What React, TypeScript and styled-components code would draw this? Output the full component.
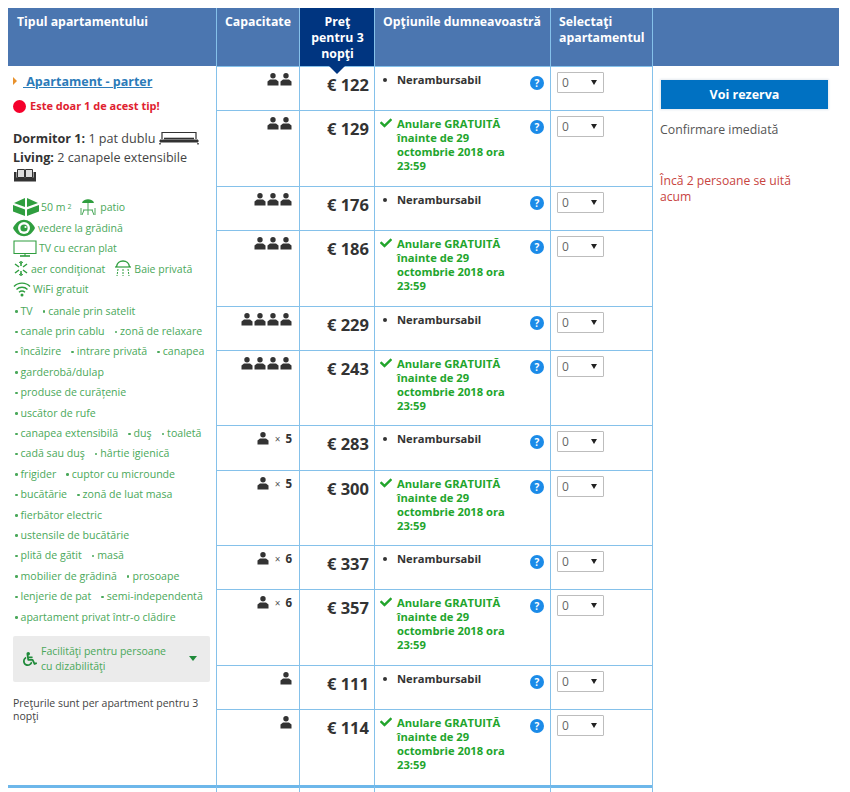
import React from "react";
import styled, { createGlobalStyle } from "styled-components";
import { FaWheelchair, FaCheck } from "react-icons/fa";

const GREEN = "#4aa85a";
const LINE = "#85c1ea";

const GlobalStyle = createGlobalStyle`
  html, body {
    margin: 0;
    padding: 0;
    overflow: hidden;
    background: #fff;
  }
  body {
    font-family: "Open Sans", "Liberation Sans", sans-serif;
    color: #333;
  }
`;

const Page = styled.div`
  padding: 8px 0 0 8px;
  width: 850px;
  height: 792px;
  box-sizing: border-box;
  overflow: hidden;
`;

const Table = styled.div`
  display: grid;
  width: 831px;
  grid-template-columns: 208px 83px 75px 176px 102px 187px;
  grid-template-rows: 58px repeat(6, 44.3px 75.5px) 8px;
`;

const HeadCell = styled.div<{ $dark?: boolean; $center?: boolean; $first?: boolean }>`
  position: relative;
  box-sizing: border-box;
  padding: ${(p) => (p.$first ? "6px 8px 0 9px" : "6px 7px 0 8px")};
  background: ${(p) => (p.$dark ? "#003580" : "#4b76b0")};
  border-left: ${(p) => (p.$first ? "none" : `1px solid ${LINE}`)};
  color: #fff;
  font-size: 12.3px;
  font-weight: 700;
  line-height: 16px;
  text-align: ${(p) => (p.$center ? "center" : "left")};
`;

const PriceArrow = styled.span`
  position: absolute;
  left: 29px;
  bottom: -8px;
  width: 0;
  height: 0;
  border-left: 8px solid transparent;
  border-right: 8px solid transparent;
  border-top: 8px solid #003580;
`;

const RoomCell = styled.div`
  grid-column: 1;
  grid-row: 2 / 14;
  padding: 7px 5px 0 5px;
  overflow: hidden;
`;

const RoomLink = styled.a`
  display: flex;
  align-items: center;
  gap: 6px;
  height: 16px;
  color: #2b7bb9;
  font-size: 12.5px;
  font-weight: 700;
  text-decoration: none;
  span {
    text-decoration: underline;
    white-space: pre;
  }
  &::before {
    content: "";
    border-left: 4px solid #e8912c;
    border-top: 4px solid transparent;
    border-bottom: 4px solid transparent;
  }
`;

const Scarcity = styled.div`
  display: flex;
  align-items: center;
  gap: 4px;
  margin-top: 9px;
  color: #e0212f;
  font-size: 11px;
  font-weight: 700;
  line-height: 16px;
  &::before {
    content: "";
    width: 13px;
    height: 13px;
    border-radius: 50%;
    background: #f5002b;
  }
`;

const Beds = styled.div`
  margin-top: 15px;
  color: #444;
  font-size: 12.6px;
  line-height: 19px;
  b {
    color: #333;
  }
  svg {
    vertical-align: -2px;
  }
`;

const Highlights = styled.div`
  margin-top: 11px;
  color: ${GREEN};
  font-size: 10.5px;
`;

const HighlightLine = styled.div`
  display: flex;
  align-items: center;
  gap: 2px;
  height: 20.5px;
  white-space: nowrap;
`;

const ShowerSlot = styled.span`
  display: flex;
  margin-left: 7px;
`;

const EyeSlot = styled.span`
  display: flex;
  margin-right: 1px;
`;

const Sup = styled.sup`
  font-size: 7px;
  line-height: 0;
`;

const Facilities = styled.div`
  margin-top: 1px;
  color: ${GREEN};
  font-size: 10.6px;
`;

const FacilityLine = styled.div`
  display: flex;
  align-items: center;
  height: 20.4px;
  white-space: nowrap;
`;

const Facility = styled.span`
  margin: 0 8px 0 2px;
  &::before {
    content: "";
    display: inline-block;
    width: 2.5px;
    height: 2.5px;
    margin: 0 3px 2px 0;
    border-radius: 50%;
    background: ${GREEN};
  }
`;

const Accessibility = styled.div`
  display: flex;
  align-items: center;
  height: 46px;
  margin: 9px 0 0 0;
  padding: 0 13px 0 10px;
  box-sizing: border-box;
  width: 197px;
  background: #ebebeb;
  border-radius: 2px;
  color: ${GREEN};
  font-size: 10.5px;
  line-height: 15px;
  svg {
    flex: none;
  }
  p {
    flex: 1;
    margin: 1px 20px 0 4px;
  }
  &::after {
    content: "";
    flex: none;
    border-top: 5px solid #1f8a3a;
    border-left: 4px solid transparent;
    border-right: 4px solid transparent;
  }
`;

const PriceNote = styled.p`
  margin: 15px 0 0 0;
  color: #444;
  font-size: 10.5px;
  line-height: 13px;
`;

const Cell = styled.div<{ $right?: boolean }>`
  box-sizing: border-box;
  border-left: 1px solid ${LINE};
  border-top: 1px solid ${LINE};
  ${(p) => (p.$right ? "text-align: right;" : "")}
`;

const CapacityCell = styled(Cell)`
  display: flex;
  justify-content: flex-end;
  align-items: flex-start;
  gap: 1px;
  padding: 6px 7px 0 0;
`;

const Times = styled.span`
  margin: 0 0 0 5px;
  color: #555;
  font-size: 10px;
  line-height: 14px;
`;

const Count = styled.span`
  margin-left: 4px;
  font-size: 11.5px;
  font-weight: 700;
  line-height: 14px;
`;

const PriceCell = styled(Cell)`
  padding: 8px 5px 0 0;
  color: #333;
  font-size: 16.5px;
  font-weight: 700;
  line-height: 20px;
  white-space: nowrap;
`;

const OptionCell = styled(Cell)`
  display: flex;
  align-items: flex-start;
  padding: 6px 6px 0 5px;
`;

const Marker = styled.span`
  flex: none;
  display: flex;
  justify-content: flex-start;
  align-items: flex-start;
  width: 17px;
  height: 14px;
  color: #22a52c;
`;

const Dot = styled.span`
  width: 4px;
  height: 4px;
  margin: 5px 0 0 3px;
  border-radius: 50%;
  background: #333;
`;

const OptionText = styled.span<{ $free?: boolean }>`
  flex: 1;
  color: ${(p) => (p.$free ? "#22a52c" : "#333")};
  font-size: 11.2px;
  font-weight: 700;
  line-height: 14px;
`;

const Help = styled.span`
  flex: none;
  display: block;
  width: 14px;
  height: 14px;
  margin: 3px 0 0 18px;
  border-radius: 50%;
  background: #1b8be8;
  color: #fff;
  font-size: 10px;
  font-weight: 700;
  line-height: 14px;
  text-align: center;
`;

const SelectCell = styled(Cell)`
  padding: 5px 0 0 6px;
`;

const SelectBox = styled.div`
  position: relative;
  width: 47px;
  height: 21px;
  &::after {
    content: "";
    position: absolute;
    top: 8px;
    right: 7px;
    border-top: 5px solid #222;
    border-left: 3px solid transparent;
    border-right: 3px solid transparent;
    pointer-events: none;
  }
`;

const Select = styled.select`
  appearance: none;
  display: block;
  width: 100%;
  height: 100%;
  padding: 0 0 0 4px;
  box-sizing: border-box;
  background: #fff;
  border: 1px solid #bdbdbd;
  border-radius: 1px;
  color: #666;
  font-family: inherit;
  font-size: 12px;
`;

const ActionCell = styled.div`
  grid-column: 6;
  grid-row: 2 / 14;
  box-sizing: border-box;
  border-left: 1px solid ${LINE};
  padding: 14px 11px 0 7px;
`;

const ReserveButton = styled.button`
  display: block;
  width: 167px;
  height: 29px;
  margin-left: 1px;
  padding: 0;
  background: #0071c2;
  border: none;
  box-shadow: 0 0 2px 1px #e4e9ef;
  color: #fff;
  font-family: inherit;
  font-size: 12.5px;
  font-weight: 700;
`;

const Instant = styled.p`
  margin: 13px 0 0 0;
  color: #555;
  font-size: 12.3px;
  line-height: 16px;
`;

const Watching = styled.p`
  margin: 35px 0 0 0;
  max-width: 150px;
  color: #c8453f;
  font-size: 12.2px;
  line-height: 16px;
`;

const FootCell = styled.div<{ $first?: boolean }>`
  border-top: 3px solid #6db7ea;
  border-left: ${(p) => (p.$first ? "none" : `1px solid ${LINE}`)};
`;

const FootGap = styled.div`
  border-left: 1px solid ${LINE};
`;

const Person = () => (
  <svg width="12" height="13" viewBox="0 0 12 13" fill="#333">
    <circle cx="6" cy="2.8" r="2.7" />
    <path d="M3 6.500h6l2.500 2V12.500H.5V8.500z" />
  </svg>
);

const Bed = () => (
  <svg width="40" height="14" viewBox="0 0 40 14" fill="none" stroke="#333">
    <path d="M3 8V1.500h34V8" strokeWidth="1.200" />
    <path d="M1 9h38v2H1z" fill="#333" strokeWidth="1" />
    <path d="M5 7.500h30" strokeWidth="1.600" />
    <path d="M1 12v1.500M39 12v1.500" strokeWidth="1.500" />
  </svg>
);

const Sofa = () => (
  <svg width="24" height="15" viewBox="0 0 24 15" fill="#333">
    <path d="M4.500 1.500h7v8h-7zM12.500 1.500h7v8h-7z" fill="#ddd" stroke="#333" />
    <path d="M1 4h2.500v6.500h17V4H23v9.500H1z" />
    <path d="M3 9.500h18v2H3z" />
  </svg>
);

const SizeIcon = () => (
  <svg width="26" height="18" viewBox="0 0 26 18" fill="#2f9e3f">
    <path d="M12 0 1 5l11 4zM14 0l11 5-11 4z" />
    <path d="M0 7l12 4.500V18L0 13.500zM26 7 14 11.500V18l12-4.500z" />
  </svg>
);

const PatioIcon = () => (
  <svg width="20" height="18" viewBox="0 0 20 18" fill="none" stroke="#4aa85a" strokeWidth="1">
    <path d="M4 5C5 0 15 0 16 5z" fill="#2f9e3f" stroke="none" />
    <path d="M10 5v12M3 17v-7M17 17v-7M5 12h10M6 12l-2 5M14 12l2 5" />
  </svg>
);

const EyeIcon = () => (
  <svg width="22" height="18" viewBox="0 0 22 18">
    <path d="M0 9C5-2 17-2 22 9 17 20 5 20 0 9z" fill="#2f9e3f" />
    <circle cx="11" cy="9" r="6" fill="#fff" />
    <circle cx="11" cy="9" r="3.600" fill="#2f9e3f" />
    <circle cx="12.500" cy="8" r="1.100" fill="#fff" />
  </svg>
);

const TvIcon = () => (
  <svg width="24" height="17" viewBox="0 0 24 17" fill="none" stroke="#2f9e3f" strokeWidth="1.100">
    <path d="M1 1h22v12.500H1z" />
    <path d="M7 16h10" strokeWidth="1.600" />
    <path d="M12 13.500V16" />
  </svg>
);

const SnowIcon = () => (
  <svg width="16" height="17" viewBox="0 0 16 17" fill="none" stroke="#2f9e3f" strokeWidth="1.500">
    <path d="M8 1v5M8 11v5M2 4l4 3M10 10l4 3M14 4l-4 3M6 10l-4 3" />
    <path d="M6 2l2 1.500L10 2M6 15l2-1.500 2 1.500" strokeWidth="1" />
  </svg>
);

const ShowerIcon = () => (
  <svg width="18" height="17" viewBox="0 0 18 17" fill="none" stroke="#2f9e3f">
    <path d="M2.500 7C3-1 15-1 15.500 7" strokeWidth="1.500" />
    <path d="M1 7h16" strokeWidth="1.200" />
    <path d="M4 9l-1 7M9 9v7M14 9l1 7" strokeWidth="1" strokeDasharray="2 1" />
  </svg>
);

const WifiIcon = () => (
  <svg width="18" height="16" viewBox="0 0 18 16" fill="none" stroke="#2f9e3f" strokeWidth="1.400">
    <path d="M1 5.500C5 1 13 1 17 5.500M3.500 8.500C6.500 5.500 11.500 5.500 14.500 8.500M6 11.200C7.700 9.800 10.300 9.800 12 11.200" />
    <circle cx="9" cy="14" r="1.500" fill="#2f9e3f" stroke="none" />
  </svg>
);

const facilityLines = [
  ["TV", "canale prin satelit"],
  ["canale prin cablu", "zonă de relaxare"],
  ["încălzire", "intrare privată", "canapea"],
  ["garderobă/dulap"],
  ["produse de curățenie"],
  ["uscător de rufe"],
  ["canapea extensibilă", "duş", "toaletă"],
  ["cadă sau duş", "hârtie igienică"],
  ["frigider", "cuptor cu microunde"],
  ["bucătărie", "zonă de luat masa"],
  ["fierbător electric"],
  ["ustensile de bucătărie"],
  ["plită de gătit", "masă"],
  ["mobilier de grădină", "prosoape"],
  ["lenjerie de pat", "semi-independentă"],
  ["apartament privat într-o clădire"],
];

const rows = [
  { people: 2, price: 122, free: false },
  { people: 2, price: 129, free: true },
  { people: 3, price: 176, free: false },
  { people: 3, price: 186, free: true },
  { people: 4, price: 229, free: false },
  { people: 4, price: 243, free: true },
  { people: 5, price: 283, free: false },
  { people: 5, price: 300, free: true },
  { people: 6, price: 337, free: false },
  { people: 6, price: 357, free: true },
  { people: 1, price: 111, free: false },
  { people: 1, price: 114, free: true },
];

const Capacity = ({ people }: { people: number }) => {
  if (people > 4) {
    return (
      <CapacityCell>
        <Person />
        <Times>×</Times>
        <Count>{people}</Count>
      </CapacityCell>
    );
  }
  return (
    <CapacityCell>
      {Array.from({ length: people }, (_, i) => (
        <Person key={i} />
      ))}
    </CapacityCell>
  );
};

export default function App() {
  return (
    <Page>
      <GlobalStyle />
      <Table>
        <HeadCell $first>Tipul apartamentului</HeadCell>
        <HeadCell>Capacitate</HeadCell>
        <HeadCell $dark $center>
          Preţ pentru 3 nopţi
          <PriceArrow />
        </HeadCell>
        <HeadCell>Opţiunile dumneavoastră</HeadCell>
        <HeadCell>Selectaţi apartamentul</HeadCell>
        <HeadCell />

        <RoomCell>
          <RoomLink href="#room">
            <span> Apartament - parter</span>
          </RoomLink>
          <Scarcity>Este doar 1 de acest tip!</Scarcity>
          <Beds>
            <b>Dormitor 1:</b> 1 pat dublu <Bed />
            <br />
            <b>Living:</b> 2 canapele extensibile
            <br />
            <Sofa />
          </Beds>
          <Highlights>
            <HighlightLine>
              <SizeIcon />
              50 m<Sup>2</Sup>&nbsp;
              <PatioIcon />
              patio
            </HighlightLine>
            <HighlightLine>
              <EyeSlot>
                <EyeIcon />
              </EyeSlot>
              vedere la grădină
            </HighlightLine>
            <HighlightLine>
              <TvIcon />
              TV cu ecran plat
            </HighlightLine>
            <HighlightLine>
              <SnowIcon />
              aer condiţionat
              <ShowerSlot>
                <ShowerIcon />
              </ShowerSlot>
              Baie privată
            </HighlightLine>
            <HighlightLine>
              <WifiIcon />
              WiFi gratuit
            </HighlightLine>
          </Highlights>
          <Facilities>
            {facilityLines.map((line) => (
              <FacilityLine key={line[0]}>
                {line.map((item) => (
                  <Facility key={item}>{item}</Facility>
                ))}
              </FacilityLine>
            ))}
          </Facilities>
          <Accessibility>
            <FaWheelchair size={14} color="#1f8a3a" />
            <p>Facilităţi pentru persoane cu dizabilităţi</p>
          </Accessibility>
          <PriceNote>Preţurile sunt per apartment pentru 3 nopţi</PriceNote>
        </RoomCell>

        {rows.map((row, i) => (
          <React.Fragment key={row.price}>
            <Capacity people={row.people} />
            <PriceCell $right>€ {row.price}</PriceCell>
            <OptionCell>
              <Marker>{row.free ? <FaCheck size={12} /> : <Dot />}</Marker>
              <OptionText $free={row.free}>
                {row.free
                  ? "Anulare GRATUITĂ înainte de 29 octombrie 2018 ora 23:59"
                  : "Nerambursabil"}
              </OptionText>
              <Help>?</Help>
            </OptionCell>
            <SelectCell>
              <SelectBox>
                <Select aria-label={`Apartamente rând ${i + 1}`} defaultValue="0">
                  <option value="0">0</option>
                  <option value="1">1</option>
                </Select>
              </SelectBox>
            </SelectCell>
          </React.Fragment>
        ))}

        <ActionCell>
          <ReserveButton>Voi rezerva</ReserveButton>
          <Instant>Confirmare imediată</Instant>
          <Watching>Încă 2 persoane se uită acum</Watching>
        </ActionCell>

        <FootCell $first />
        <FootCell />
        <FootCell />
        <FootCell />
        <FootCell />
        <FootGap />
      </Table>
    </Page>
  );
}
